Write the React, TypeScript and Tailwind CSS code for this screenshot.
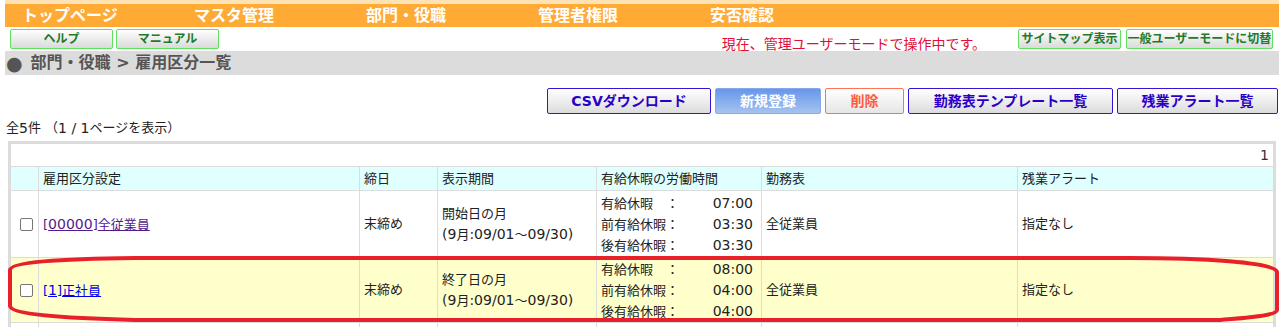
import React from "react";

const NAV = ["トップページ", "マスタ管理", "部門・役職", "管理者権限", "安否確認"];

function GreenBtn({ children, className }: { children: React.ReactNode; className: string }) {
  return (
    <div
      className={
        "flex h-[20px] items-center justify-center rounded-[2px] border border-[#5fe05f] bg-linear-to-b from-white to-[#dadada] text-[12px] font-bold leading-none text-[#1f7a2a] " +
        className
      }
    >
      {children}
    </div>
  );
}

function ActBtn({ children, className }: { children: React.ReactNode; className: string }) {
  return (
    <div
      className={
        "flex h-[26px] items-center justify-center rounded-[2px] border text-[14px] font-bold leading-none " + className
      }
    >
      {children}
    </div>
  );
}

function L({ children }: { children: React.ReactNode }) {
  return <span className="text-[14px]">{children}</span>;
}

function Check() {
  return <span className="block h-[13px] w-[13px] rounded-[2px] border border-[#767676] bg-white" />;
}

function Times({ a, b, c }: { a: string; b: string; c: string }) {
  const rows: [string, string][] = [
    ["有給休暇　：", a],
    ["前有給休暇：", b],
    ["後有給休暇：", c],
  ];
  return (
    <div className="flex w-[152px] flex-col leading-[21px]">
      {rows.map(([l, t]) => (
        <div key={l} className="flex justify-between">
          <span>{l}</span>
          <span className="text-[14px]">{t}</span>
        </div>
      ))}
    </div>
  );
}

type Row = {
  code: string;
  name: string;
  visited: boolean;
  period: string;
  t: [string, string, string];
  bg: string;
  h: string;
};

const ROWS: Row[] = [
  { code: "00000", name: "全従業員", visited: true, period: "開始日の月", t: ["07:00", "03:30", "03:30"], bg: "bg-white", h: "h-[67px]" },
  { code: "1", name: "正社員", visited: false, period: "終了日の月", t: ["08:00", "04:00", "04:00"], bg: "bg-[#ffffcc]", h: "h-[65px]" },
];

export default function App() {
  return (
    <div className="relative h-[327px] w-[1284px] overflow-hidden bg-white font-['DejaVu_Sans','Noto_Sans_CJK_JP',sans-serif] text-[13px] text-[#222]">
      <div className="ml-[5px] w-[1274px]">
        {/* top stripe */}
        <div className="h-[4px] bg-[#fde3b3]" />
        {/* nav */}
        <div className="flex h-[23px] items-center bg-[#ffaa35]">
          {NAV.map((n) => (
            <div key={n} className="w-[172px] pl-[17px] text-[16px] font-bold leading-none text-white">
              {n}
            </div>
          ))}
        </div>
        {/* tool row */}
        <div className="flex h-[24px] items-start pt-[2px]">
          <div className="ml-[5px] flex gap-[3px]">
            <GreenBtn className="w-[103px]">ヘルプ</GreenBtn>
            <GreenBtn className="w-[103px]">マニュアル</GreenBtn>
          </div>
          <div className="ml-auto flex items-start pr-[6px]">
            <div className="mr-[32px] mt-[7px] text-[14px] leading-[16px] text-[#e0103a]">
              現在、管理ユーザーモードで操作中です。
            </div>
            <GreenBtn className="w-[103px]">サイトマップ表示</GreenBtn>
            <GreenBtn className="ml-[5px] w-[147px]">一般ユーザーモードに切替</GreenBtn>
          </div>
        </div>
        {/* breadcrumb */}
        <div className="flex h-[24px] items-center bg-[#dcdcdc] pl-[1px] text-[16px] font-bold leading-none text-[#555]">
          <span className="mr-[8px] text-[19px] leading-none">●</span>
          <span>部門・役職 &gt; 雇用区分一覧</span>
        </div>
        {/* action buttons */}
        <div className="mt-[13px] flex justify-end gap-[4px] pr-[1px]">
          <ActBtn className="w-[164px] border-[#3514d8] bg-linear-to-b from-white to-[#dcdcdc] text-[#2a00c8]">CSVダウンロード</ActBtn>
          <ActBtn className="w-[106px] border-[#86a8ea] bg-linear-to-b from-[#6797ea] to-[#a6c2f0] text-white">新規登録</ActBtn>
          <ActBtn className="w-[79px] border-[#ff7352] bg-linear-to-b from-white to-[#e6e6e6] text-[#ff5a3a]">削除</ActBtn>
          <ActBtn className="w-[205px] border-[#3514d8] bg-linear-to-b from-white to-[#dcdcdc] text-[#2a00c8]">勤務表テンプレート一覧</ActBtn>
          <ActBtn className="w-[161px] border-[#3514d8] bg-linear-to-b from-white to-[#dcdcdc] text-[#2a00c8]">残業アラート一覧</ActBtn>
        </div>
        {/* count */}
        <div className="flex h-[27px] items-center pl-[1px] leading-none">
          全<L>5</L>件 （<L>1 / 1</L>ページを表示）
        </div>
        {/* table */}
        <div className="ml-[3px] w-[1268px] border-[3px] border-[#dcdcdc]">
          <div className="flex h-[22px] items-center justify-end pr-[4px] text-[14px] text-[#333]">1</div>
          <div className="flex h-[24px] border-t border-[#dcdcdc] bg-[#e0ffff]">
            <div className="w-[27px] shrink-0" />
            <div className="flex w-[321px] shrink-0 items-center border-l border-[#dcdcdc] px-[4px]">雇用区分設定</div>
            <div className="flex w-[78px] shrink-0 items-center border-l border-[#dcdcdc] px-[4px]">締日</div>
            <div className="flex w-[159px] shrink-0 items-center border-l border-[#dcdcdc] px-[4px]">表示期間</div>
            <div className="flex w-[165px] shrink-0 items-center border-l border-[#dcdcdc] px-[4px]">有給休暇の労働時間</div>
            <div className="flex w-[256px] shrink-0 items-center border-l border-[#dcdcdc] px-[4px]">勤務表</div>
            <div className="flex w-[256px] shrink-0 items-center border-l border-[#dcdcdc] px-[4px]">残業アラート</div>
          </div>
          {ROWS.map((r) => (
            <div key={r.code} className={"flex border-t border-[#dcdcdc] " + r.bg + " " + r.h}>
              <div className="flex w-[27px] shrink-0 items-center pl-[9px]">
                <Check />
              </div>
              <div className="flex w-[321px] shrink-0 items-center border-l border-[#dcdcdc] px-[4px]">
                <span className={"underline " + (r.visited ? "text-[#551a8b]" : "text-[#0000ee]")}>
                  [<L>{r.code}</L>]{r.name}
                </span>
              </div>
              <div className="flex w-[78px] shrink-0 items-center border-l border-[#dcdcdc] px-[4px]">末締め</div>
              <div className="flex w-[159px] shrink-0 items-center border-l border-[#dcdcdc] px-[4px]">
                <div className="leading-[21px]">
                  <div>{r.period}</div>
                  <div>
                    <L>(9</L>月<L>:09/01</L>～<L>09/30)</L>
                  </div>
                </div>
              </div>
              <div className="flex w-[165px] shrink-0 items-center border-l border-[#dcdcdc] px-[4px]">
                <Times a={r.t[0]} b={r.t[1]} c={r.t[2]} />
              </div>
              <div className="flex w-[256px] shrink-0 items-center border-l border-[#dcdcdc] px-[4px]">全従業員</div>
              <div className="flex w-[256px] shrink-0 items-center border-l border-[#dcdcdc] px-[4px]">指定なし</div>
            </div>
          ))}
          {/* next row (below the visible area) */}
          <div className="flex h-[67px] border-t border-[#dcdcdc] bg-white">
            <div className="w-[27px] shrink-0" />
            <div className="w-[321px] shrink-0 border-l border-[#dcdcdc]" />
            <div className="w-[78px] shrink-0 border-l border-[#dcdcdc]" />
            <div className="w-[159px] shrink-0 border-l border-[#dcdcdc]" />
            <div className="w-[165px] shrink-0 border-l border-[#dcdcdc]" />
            <div className="w-[256px] shrink-0 border-l border-[#dcdcdc]" />
            <div className="w-[256px] shrink-0 border-l border-[#dcdcdc]" />
          </div>
        </div>
      </div>
      {/* red annotation loop */}
      <svg className="pointer-events-none absolute left-0 top-0" width="1284" height="327" viewBox="0 0 1284 327">
        <path
          d="M135 258 L1130 258 C1200 258 1276 262 1277 272 L1277 310 C1277 316 1240 318 1220 320 L135 320 C60 318 11 314 10 306 L10 270 C10 262 60 259 135 258 Z"
          fill="none"
          stroke="#e8202a"
          strokeWidth="4"
        />
      </svg>
    </div>
  );
}
